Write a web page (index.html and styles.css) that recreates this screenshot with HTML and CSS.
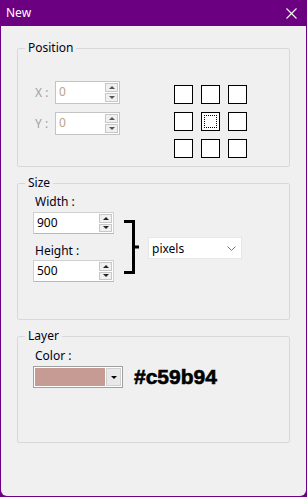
FILE: index.html
```html
<!DOCTYPE html>
<html>
<head>
<meta charset="utf-8">
<link rel="stylesheet" href="styles.css">
</head>
<body>
<div class="window">
  <div class="titlebar">
    <span class="title">New</span>
    <svg class="close" width="11" height="11" viewBox="0 0 11 11"><path d="M0.5 0.5 L10.5 10.5 M10.5 0.5 L0.5 10.5" stroke="#fff" stroke-width="1.1" fill="none"/></svg>
  </div>
  <div class="client">
    <fieldset class="group g-pos">
      <legend>Position</legend>
      <div class="pos-body">
        <div class="pos-fields">
          <div class="pos-row">
            <span class="pos-label">X :</span>
            <div class="spin disabled">
              <span class="val">0</span>
              <div class="btns"><span class="btn up"></span><span class="btn down"></span></div>
            </div>
          </div>
          <div class="pos-row">
            <span class="pos-label">Y :</span>
            <div class="spin disabled">
              <span class="val">0</span>
              <div class="btns"><span class="btn up"></span><span class="btn down"></span></div>
            </div>
          </div>
        </div>
        <div class="anchor">
          <span class="cell"></span><span class="cell"></span><span class="cell"></span>
          <span class="cell"></span><span class="cell sel"><span class="focus"></span></span><span class="cell"></span>
          <span class="cell"></span><span class="cell"></span><span class="cell"></span>
        </div>
      </div>
    </fieldset>

    <fieldset class="group g-size">
      <legend>Size</legend>
      <div class="size-body">
        <div class="size-fields">
          <div class="field-label">Width :</div>
          <div class="spin wide">
            <span class="val">900</span>
            <div class="btns"><span class="btn up"></span><span class="btn down"></span></div>
          </div>
          <div class="field-label second">Height :</div>
          <div class="spin wide">
            <span class="val">500</span>
            <div class="btns"><span class="btn up"></span><span class="btn down"></span></div>
          </div>
        </div>
        <svg class="bracket" width="16" height="54" viewBox="0 0 16 54">
          <path d="M0 1.5 H9.5 V52.5 H0 M9.5 27 H15" stroke="#000" stroke-width="3" fill="none"/>
        </svg>
        <div class="select">
          <span>pixels</span>
          <svg width="9" height="5" viewBox="0 0 9 5"><path d="M0.5 0.5 L4.5 4.5 L8.5 0.5" stroke="#777" stroke-width="1" fill="none"/></svg>
        </div>
      </div>
    </fieldset>

    <fieldset class="group g-layer">
      <legend>Layer</legend>
      <div class="layer-body">
        <div class="field-label">Color :</div>
        <div class="color-row">
          <div class="color-combo">
            <span class="swatch" style="background:#c59b94"></span>
            <span class="combo-btn"><span class="tri"></span></span>
          </div>
          <span class="hex">#c59b94</span>
        </div>
      </div>
    </fieldset>
  </div>
</div>
</body>
</html>
```

FILE: styles.css
```css
* { box-sizing: border-box; }
html, body { margin: 0; padding: 0; background: #6b0080; }
body { font-family: "Noto Sans", "Open Sans", sans-serif; font-size: 11.5px; color: #000; }

.window {
  width: 307px;
  height: 497px;
  display: flex;
  flex-direction: column;
  background: #6b0080;
  border-radius: 0 0 7px 7px;
  overflow: hidden;
}
.titlebar {
  height: 26px;
  flex: none;
  display: flex;
  align-items: center;
  justify-content: space-between;
  padding: 0 10px 0 6px;
  color: #fff;
}
.title { font-size: 12px; line-height: 16px; }
.close { display: block; }

.client {
  flex: 1;
  margin: 0 1px 1px 1px;
  background: #f0f0f0;
  border-radius: 0 0 6px 6px;
  padding: 14px 16px 0 16px;
  display: flex;
  flex-direction: column;
  gap: 8px;
}

.group {
  margin: 0;
  padding: 0;
  border: 1px solid #d8d8d8;
  border-radius: 2px;
  min-width: 0;
}
.group legend {
  margin-left: 7px;
  padding: 0 3px;
  font-size: 12px;
  line-height: 16px;
  color: #00001a;
}
.g-pos { height: 127px; }
.g-size { height: 145px; }
.g-layer { height: 115px; }

/* Position */
.pos-body {
  display: flex;
  align-items: flex-start;
  padding: 25px 0 0 17px;
}
.pos-fields { display: flex; flex-direction: column; gap: 8px; }
.pos-row { display: flex; align-items: center; }
.pos-label { width: 20px; color: #a0a0a0; font-size: 12px; }

.spin {
  display: flex;
  width: 65px;
  height: 23px;
  border: 1px solid #c4c4c4;
  background: #fff;
}
.spin.wide { width: 81px; height: 22px; border-color: #d0d0d0; border-bottom-color: #b8b8b8; }
.spin .val {
  flex: 1;
  padding-left: 3px;
  line-height: 20px;
  font-size: 12px;
}
.spin.disabled .val { color: #b8a488; }
.btns {
  width: 14px;
  display: flex;
  flex-direction: column;
  justify-content: space-between;
  padding: 1px 1px 1px 0;
}
.btn {
  flex: 1;
  margin: 0;
  border: 1px solid #c8c8c8;
  background: #f0f0f0;
  display: flex;
  align-items: center;
  justify-content: center;
}
.btn + .btn { margin-top: 1px; }
.btn::after {
  content: "";
  width: 0; height: 0;
  border-left: 3px solid transparent;
  border-right: 3px solid transparent;
}
.btn.up::after { border-bottom: 3px solid #222; }
.btn.down::after { border-top: 3px solid #222; }
.spin.disabled .btn.up::after { border-bottom-color: #555; }
.spin.disabled .btn.down::after { border-top-color: #555; }

.anchor {
  margin: 4px 0 0 54px;
  display: grid;
  grid-template-columns: repeat(3, 19px);
  grid-auto-rows: 19px;
  gap: 8px;
}
.cell {
  border: 1px solid #000;
  background: #fff;
  display: flex;
  align-items: center;
  justify-content: center;
}
.cell .focus {
  width: 13px;
  height: 13px;
  border: 1px dotted #000;
}

/* Size */
.size-body {
  display: flex;
  align-items: flex-start;
  padding: 3px 0 0 15px;
}
.size-fields { display: flex; flex-direction: column; }
.field-label {
  padding-left: 2px;
  font-size: 12px;
  line-height: 16px;
  margin-bottom: 2px;
  color: #00001a;
}
.field-label.second { margin-top: 9px; margin-bottom: 1px; }
.bracket { display: block; margin: 26px 0 0 10px; }
.select {
  margin: 43px 0 0 8px;
  width: 94px;
  height: 22px;
  background: #fff;
  border: 1px solid #e6e6e6;
  display: flex;
  align-items: center;
  justify-content: space-between;
  padding: 0 5px 0 3px;
  font-size: 12px;
  color: #000010;
}
.select svg { display: block; }

/* Layer */
.layer-body { padding: 4px 0 0 15px; }
.color-row { display: flex; align-items: center; }
.color-combo {
  width: 90px;
  height: 22px;
  border: 1px solid #a0a0a0;
  background: #fff;
  display: flex;
  padding: 1px;
}
.swatch { width: 70px; height: 100%; }
.combo-btn {
  flex: 1;
  margin-left: 1px;
  background: #e8e8e8;
  border: 1px solid #d0d0d0;
  display: flex;
  align-items: center;
  justify-content: center;
}
.tri {
  width: 0; height: 0;
  border-left: 3px solid transparent;
  border-right: 3px solid transparent;
  border-top: 3px solid #000;
}
.hex {
  margin-left: 11px;
  font-family: "Liberation Sans", Arial, sans-serif;
  font-weight: bold;
  font-size: 21px;
  line-height: 22px;
  color: #000;
  -webkit-text-stroke: 0.6px #000;
}
```
